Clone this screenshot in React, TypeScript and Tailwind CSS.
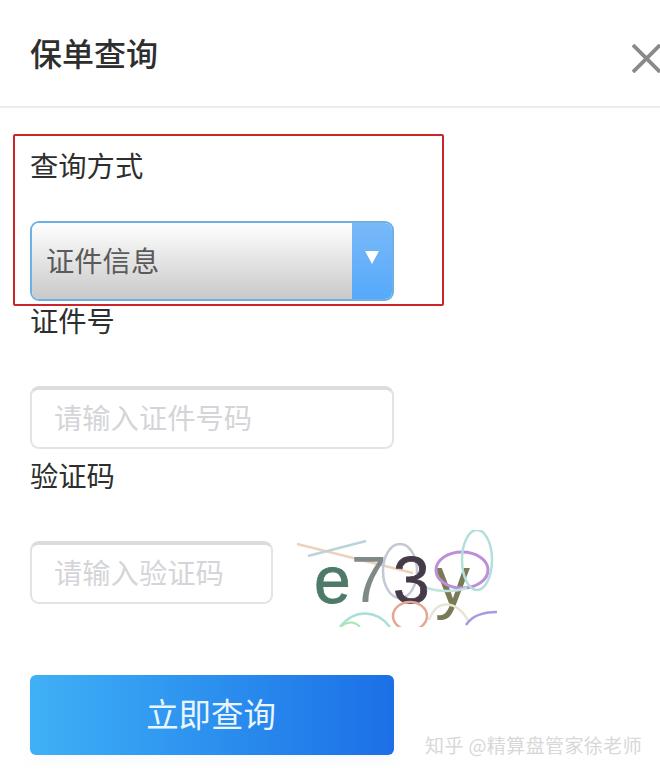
export default function App() {
  return (
    <div className="relative w-[660px] h-[774px] overflow-hidden bg-white font-['Noto_Sans_CJK_SC','Noto_Sans',sans-serif] text-[#2b2b2b]">
      <header className="flex h-[108px] items-start justify-between border-b-2 border-[#ececec]">
        <h1 className="mt-[31px] ml-[30px] text-[32px] leading-[42px] font-medium text-[#2e2e2e]">保单查询</h1>
        <svg className="mt-[44px]" width="28" height="29" viewBox="0 0 28 29" fill="none" stroke="#8a8a8a" strokeWidth="3.8">
          <path d="M1 1 L28 28 M28 1 L1 28" />
        </svg>
      </header>

      <main className="flex flex-col pl-[30px]">
        <label className="mt-[37px] text-[28.3px] leading-[40px] text-[#2e2e2e]">查询方式</label>
        <div className="mt-[36px] flex h-[80px] w-[364px] overflow-hidden rounded-[9px] border-2 border-[#6fb0e2]">
          <div className="flex flex-1 items-center bg-gradient-to-b from-white to-[#c9c9c9] pb-[2px] pl-[14px] text-[28.3px] text-[#5a5a5a]">
            证件信息
          </div>
          <div className="flex w-[40px] justify-center bg-gradient-to-b from-[#78b9f8] to-[#55a9fb] pt-[28px]">
            <svg width="14" height="13" viewBox="0 0 14 13"><path d="M0 0 H14 L7 13 Z" fill="#ffffff" /></svg>
          </div>
        </div>

        <label className="-mt-[1px] text-[28.3px] leading-[40px] text-[#2e2e2e]">证件号</label>
        <div className="mt-[46px] flex h-[63px] w-[364px] items-center rounded-[9px] border-2 border-[#e3e3e3] border-t-[4px] border-t-[#dcdcdc] pb-[3px] pl-[22px] text-[28.3px] text-[#d4d5d9]">
          请输入证件号码
        </div>

        <label className="mt-[6px] text-[28.3px] leading-[40px] text-[#2e2e2e]">验证码</label>
        <div className="mt-[46px] flex h-[97px] items-start">
          <div className="flex h-[63px] w-[243px] items-center rounded-[9px] border-2 border-[#e3e3e3] border-t-[4px] border-t-[#dcdcdc] pb-[3px] pl-[22px] text-[28.3px] text-[#d4d5d9]">
            请输入验证码
          </div>
          <svg className="-mt-[11px] ml-[24px] blur-[0.7px]" width="202" height="97" viewBox="0 0 202 97" fill="none">
            <path d="M0 14 L116 43" stroke="#ecd2bd" strokeWidth="2.5" />
            <path d="M11 26 L69 11" stroke="#bcd3d8" strokeWidth="2.5" />
            <text x="17" y="73" fontFamily="'Liberation Sans',sans-serif" fontSize="66" fill="#4f7a68" stroke="#4f7a68" strokeWidth="0.8">e</text>
            <text x="54" y="72" fontFamily="'Liberation Sans',sans-serif" fontSize="64" fill="#7f8a88">7</text>
            <ellipse cx="103" cy="41" rx="17" ry="27" stroke="#c4c8d4" strokeWidth="2.5" />
            <text x="96" y="73" fontFamily="'Liberation Sans',sans-serif" fontSize="66" fill="#443a48" stroke="#443a48" strokeWidth="0.8">3</text>
            <text x="138" y="75" fontFamily="'Liberation Sans',sans-serif" fontSize="70" fill="#7b7a56">y</text>
            <ellipse cx="165" cy="40" rx="26" ry="18" stroke="#bd8fd6" strokeWidth="3" />
            <ellipse cx="180" cy="30" rx="15" ry="30" stroke="#b2dfdc" strokeWidth="2.5" />
            <path d="M130 58 C142 62 158 62 170 58" stroke="#bfe3e2" strokeWidth="2.5" />
            <path d="M43 97 C58 78 80 80 93 97" stroke="#a8e0d8" strokeWidth="2.5" />
            <path d="M43 97 C50 91 58 91 63 97" stroke="#a8e6b4" strokeWidth="2" />
            <ellipse cx="113" cy="86" rx="17" ry="14" stroke="#e3a795" strokeWidth="2.5" />
            <path d="M132 90 C140 68 160 70 172 92" stroke="#e7e6d2" strokeWidth="2.5" />
            <path d="M169 95 C176 84 188 82 200 82" stroke="#a69ae6" strokeWidth="2.5" />
          </svg>
        </div>

        <button className="mt-[37px] h-[80px] w-[364px] rounded-[6px] bg-gradient-to-r from-[#40b0f6] to-[#1d6fe6] pb-[3px] pr-[2px] text-[32.4px] text-[#e9f6ff] shadow-[0_6px_14px_rgba(100,150,220,0.06)]">
          立即查询
        </button>
      </main>

      <div className="absolute left-[13px] top-[134px] h-[172px] w-[431px] rounded-[2px] border-[2.5px] border-[#c9252b]" />
      <div className="absolute left-[425px] top-[731px] text-[19px] leading-[28px] tracking-[0.4px] text-[#d8d8d8] whitespace-nowrap">
        知乎 @精算盘管家徐老师
      </div>
    </div>
  );
}
